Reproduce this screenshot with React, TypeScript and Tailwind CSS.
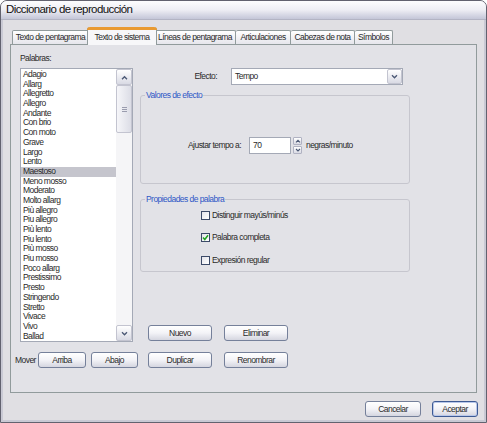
import React from 'react';

const words = [
  'Adagio', 'Allarg', 'Allegretto', 'Allegro', 'Andante', 'Con brio', 'Con moto', 'Grave', 'Largo', 'Lento',
  'Maestoso', 'Meno mosso', 'Moderato', 'Molto allarg', 'Più allegro', 'Piu allegro', 'Più lento', 'Piu lento',
  'Più mosso', 'Piu mosso', 'Poco allarg', 'Prestissimo', 'Presto', 'Stringendo', 'Stretto', 'Vivace', 'Vivo', 'Ballad',
];

const tabs = [
  { label: 'Texto de pentagrama', w: 'w-[77px]' },
  { label: 'Texto de sistema', w: 'w-[70px]', active: true },
  { label: 'Líneas de pentagrama', w: 'w-[81px]' },
  { label: 'Articulaciones', w: 'w-[55px]' },
  { label: 'Cabezas de nota', w: 'w-[64px]' },
  { label: 'Símbolos', w: 'w-[38px]' },
];

function Chevron({ dir = 'down', size = 7 }: { dir?: 'up' | 'down'; size?: number }) {
  return (
    <svg width={size} height={size - 2} viewBox="0 0 8 6">
      <path
        d={dir === 'up' ? 'M1 5 L4 2 L7 5' : 'M1 1.5 L4 4.5 L7 1.5'}
        fill="none"
        stroke="#4a5874"
        strokeWidth="1.6"
      />
    </svg>
  );
}

function XpButton({ label, w, primary }: { label: string; w: string; primary?: boolean }) {
  return (
    <button
      className={`${w} h-[16px] shrink-0 rounded-[3px] border bg-gradient-to-b from-white via-[#f3f3f7] to-[#d5d6e0] text-[8.5px] tracking-[-0.55px] leading-none text-[#2a2a2a] whitespace-nowrap ${
        primary ? 'border-[#3d5a94] shadow-[inset_0_0_0_1px_#b9c8ea]' : 'border-[#75809a]'
      }`}
    >
      {label}
    </button>
  );
}

function ScrollBtn({ dir }: { dir: 'up' | 'down' }) {
  return (
    <div className="h-[16px] w-full rounded-[2px] border border-[#c3c4d0] bg-gradient-to-b from-white to-[#d9dae4] flex items-center justify-center">
      <Chevron dir={dir} />
    </div>
  );
}

function Check({ label, checked }: { label: string; checked?: boolean }) {
  return (
    <div className="flex items-center h-[12px]">
      <div className="w-[9px] h-[9px] border border-[#3c4a68] bg-gradient-to-br from-[#e4e4ea] to-white flex items-center justify-center">
        {checked && (
          <svg width="7" height="7" viewBox="0 0 7 7">
            <path d="M1 3.5 L2.8 5.5 L6 1.2" fill="none" stroke="#22a322" strokeWidth="1.5" />
          </svg>
        )}
      </div>
      <span className="ml-[2px] whitespace-nowrap">{label}</span>
    </div>
  );
}

export default function App() {
  return (
    <div className="w-[487px] h-[423px] overflow-hidden rounded-t-[7px] border border-[#62626f] bg-[#e0dfe3] flex flex-col font-['Liberation_Sans',Arial,sans-serif] text-[8.5px] tracking-[-0.55px] text-[#2a2a2a]">
      {/* title bar */}
      <div className="h-[19px] shrink-0 bg-gradient-to-b from-[#fdfdfe] via-[#eeeef4] to-[#c4c6d8] border-b border-[#b3b4c4] flex items-center pl-[5px]">
        <span className="text-[11.5px] tracking-[-0.6px] text-[#111] whitespace-nowrap">Diccionario de reproducción</span>
      </div>

      <div className="flex-1 flex flex-col border-x-2 border-b-2 border-[#c9c9d4] px-[7px] pt-[7px]">
        {/* tabs */}
        <div className="flex items-end h-[18px] pl-[2px] -mb-px relative z-10">
          {tabs.map((t, i) =>
            t.active ? (
              <div
                key={t.label}
                className={`${t.w} h-[18px] -mx-[2px] relative z-10 bg-[#f7f7f9] border-x border-[#919b9c] rounded-t-[3px] flex flex-col`}
              >
                <div className="h-[3px] rounded-t-[3px] bg-[#e99a31] -mx-px" />
                <div className="flex-1 flex items-center justify-center whitespace-nowrap pb-[1px]">{t.label}</div>
              </div>
            ) : (
              <div
                key={t.label}
                className={`${t.w} h-[14px] mb-[1px] border-t border-r ${i === 0 ? 'border-l' : ''} border-[#919b9c] rounded-t-[2px] bg-gradient-to-b from-white to-[#e6e6ec] flex items-center justify-center whitespace-nowrap`}
              >
                {t.label}
              </div>
            )
          )}
        </div>

        {/* panel */}
        <div className="h-[349px] border border-[#919b9c] bg-[#e2e2e7] flex flex-col">
          <div className="flex">
            {/* left column */}
            <div className="pl-[9px] pt-[8px] flex flex-col">
              <div className="h-[10px] leading-[10px]">Palabras:</div>
              <div className="mt-[5px] w-[113px] h-[274px] border border-[#a4a9b6] bg-white flex">
                <div className="flex-1 overflow-hidden pt-[1px]">
                  {words.map((w) => (
                    <div
                      key={w}
                      className={`h-[9.7px] leading-[9.7px] pl-[2px] whitespace-nowrap ${
                        w === 'Maestoso' ? 'bg-[#c5c5cd]' : ''
                      }`}
                    >
                      {w}
                    </div>
                  ))}
                </div>
                <div className="w-[16px] flex flex-col bg-[#f5f5f7]">
                  <ScrollBtn dir="up" />
                  <div className="h-[48px] rounded-[2px] border border-[#c3c4d0] bg-gradient-to-r from-[#f6f6f9] to-[#dcdde6] flex flex-col items-center justify-center gap-[1px]">
                    <div className="w-[5px] h-px bg-[#9a9cae]" />
                    <div className="w-[5px] h-px bg-[#9a9cae]" />
                    <div className="w-[5px] h-px bg-[#9a9cae]" />
                  </div>
                  <div className="flex-1" />
                  <ScrollBtn dir="down" />
                </div>
              </div>
            </div>

            {/* right column */}
            <div className="ml-[7px] w-[270px] pt-[23px] flex flex-col">
              <div className="flex items-center h-[17px]">
                <span className="w-[77px] text-right whitespace-nowrap">Efecto:</span>
                <div className="ml-[14px] w-[172px] h-[17px] border border-[#a4a9b6] bg-white flex items-center">
                  <span className="flex-1 pl-[3px]">Tempo</span>
                  <div className="w-[15px] h-[15px] rounded-[2px] border border-[#c3c4d0] bg-gradient-to-b from-white to-[#d9dae4] flex items-center justify-center">
                    <Chevron dir="down" />
                  </div>
                </div>
              </div>

              <fieldset className="mt-[5px] h-[94px] border border-[#c6c6ce] rounded-[3px]">
                <legend className="ml-[4px] px-[1px] leading-[10px] text-[#2e57c6] whitespace-nowrap">Valores de efecto</legend>
                <div className="pl-[47px] pt-[37px] flex items-center">
                  <span className="w-[61px] whitespace-nowrap">Ajustar tempo a:</span>
                  <div className="w-[42px] h-[17px] border border-[#a4a9b6] bg-white pl-[3px] leading-[14px]">70</div>
                  <div className="ml-[2px] w-[9px] h-[17px] flex flex-col gap-px">
                    <div className="flex-1 rounded-[1px] border border-[#b0b2c2] bg-gradient-to-b from-white to-[#d9dae4] flex items-center justify-center">
                      <Chevron dir="up" size={6} />
                    </div>
                    <div className="flex-1 rounded-[1px] border border-[#b0b2c2] bg-gradient-to-b from-white to-[#d9dae4] flex items-center justify-center">
                      <Chevron dir="down" size={6} />
                    </div>
                  </div>
                  <span className="ml-[4px] whitespace-nowrap">negras/minuto</span>
                </div>
              </fieldset>

              <fieldset className="mt-[10px] h-[78px] border border-[#c6c6ce] rounded-[3px]">
                <legend className="ml-[4px] px-[1px] leading-[10px] text-[#2e57c6] whitespace-nowrap">Propiedades de palabra</legend>
                <div className="pl-[60px] pt-[5px] flex flex-col">
                  <Check label="Distinguir mayús/minús" />
                  <div className="mt-[10px] flex">
                    <Check label="Palabra completa" checked />
                  </div>
                  <div className="mt-[11px] flex">
                    <Check label="Expresión regular" />
                  </div>
                </div>
              </fieldset>

              <div className="mt-auto mb-[1px] pl-[8px] flex gap-[12px]">
                <XpButton label="Nuevo" w="w-[64px]" />
                <XpButton label="Eliminar" w="w-[64px]" />
              </div>
            </div>
          </div>

          <div className="mt-[10px] pl-[4px] flex items-center h-[16px]">
            <span className="w-[23px] whitespace-nowrap">Mover</span>
            <XpButton label="Arriba" w="w-[48px]" />
            <div className="ml-[5px] flex">
              <XpButton label="Abajo" w="w-[47px]" />
            </div>
            <div className="ml-[10px] flex gap-[12px]">
              <XpButton label="Duplicar" w="w-[64px]" />
              <XpButton label="Renombrar" w="w-[64px]" />
            </div>
          </div>
        </div>

        {/* dialog buttons */}
        <div className="mt-[8px] flex justify-end gap-[11px] -mr-px">
          <XpButton label="Cancelar" w="w-[56px]" />
          <XpButton label="Aceptar" w="w-[46px]" primary />
        </div>
      </div>
    </div>
  );
}
